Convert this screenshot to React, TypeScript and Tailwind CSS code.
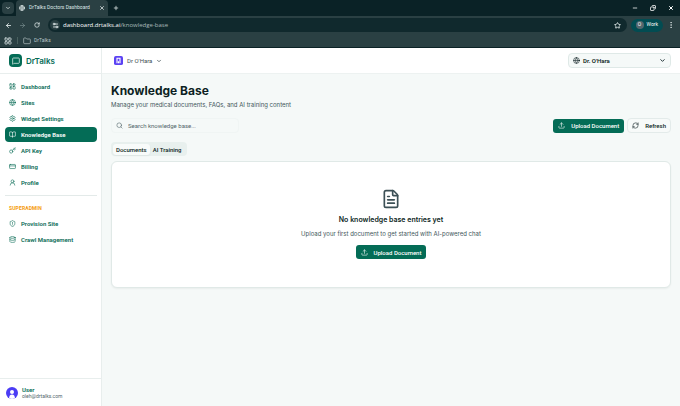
import React, { useState } from 'react';
import {
  ArrowLeft, ArrowRight, BookOpen, ChevronDown, Copy, CreditCard, Database,
  FileText, Folder, Globe, Key, LayoutDashboard, LayoutGrid, MessageSquare, Minus, MoreVertical, Plus,
  RefreshCw, RotateCw, Search, Settings, Settings2, ShieldAlert, Star, Upload, UserRound, X,
} from 'lucide-react';

const NAV = [
  { label: 'Dashboard', icon: LayoutDashboard },
  { label: 'Sites', icon: Globe },
  { label: 'Widget Settings', icon: Settings },
  { label: 'Knowledge Base', icon: BookOpen },
  { label: 'API Key', icon: Key },
  { label: 'Billing', icon: CreditCard },
  { label: 'Profile', icon: UserRound },
];

const ADMIN_NAV = [
  { label: 'Provision Site', icon: ShieldAlert },
  { label: 'Crawl Management', icon: Database },
];

const TABS = ['Documents', 'AI Training'];

function BrowserChrome() {
  return (
    <div className="border-b border-[#0b2226] bg-[#2a4043] text-[#dfe8e8]">
      <div className="flex h-4 items-center bg-[#0a2226] pl-[2px] pr-[6px]">
        <button aria-label="Search tabs" className="flex h-3 w-3 items-center justify-center rounded-sm bg-[#2a4043]">
          <ChevronDown className="h-[6px] w-[6px]" strokeWidth={3} />
        </button>
        <div className="ml-[2px] flex h-full w-[92px] items-center rounded-t bg-[#2a4043] pl-[3px] pr-[3px]">
          <Globe className="h-[6px] w-[6px] shrink-0" strokeWidth={3} />
          <span className="ml-[4px] flex-1 whitespace-nowrap text-[5px]">DrTalks Doctors Dashboard</span>
          <button aria-label="Close tab"><X className="h-[6px] w-[6px]" strokeWidth={3} /></button>
        </div>
        <button aria-label="New tab" className="ml-[5px]"><Plus className="h-[6px] w-[6px]" strokeWidth={3} /></button>
        <div className="ml-auto flex items-center gap-3 text-white">
          <button aria-label="Minimize"><Minus className="h-[6px] w-[6px]" strokeWidth={3} /></button>
          <button aria-label="Restore"><Copy className="h-[6px] w-[6px] rotate-90" strokeWidth={3} /></button>
          <button aria-label="Close"><X className="h-[6px] w-[6px]" strokeWidth={4} /></button>
        </div>
      </div>

      <div className="flex h-[18px] items-center pl-[5px] pr-[5px]">
        <button aria-label="Back"><ArrowLeft className="h-[7px] w-[7px]" strokeWidth={3} /></button>
        <button aria-label="Forward" className="ml-[7px] text-[#84999b]"><ArrowRight className="h-[7px] w-[7px]" /></button>
        <button aria-label="Reload" className="ml-[8px]"><RotateCw className="h-[6px] w-[6px]" strokeWidth={3} /></button>
        <div className="ml-[8px] flex h-[14px] flex-1 items-center rounded-full bg-[#10292d] pl-[2px] pr-[6px]">
          <span className="flex h-[10px] w-[10px] items-center justify-center rounded-full bg-[#2a4043]">
            <Settings2 className="h-[7px] w-[7px]" strokeWidth={3} />
          </span>
          <span className="ml-[3px] font-['Open_Sans',sans-serif] text-[6px] leading-[8px] text-[#a9b9ba]"><span className="text-white">dashboard.drtalks.ai</span>/knowledge-base</span>
          <button aria-label="Bookmark" className="ml-auto"><Star className="h-[7px] w-[7px]" strokeWidth={3} /></button>
        </div>
        <button className="ml-[4px] flex h-[13px] items-center gap-[3px] rounded-full bg-[#024c52] px-[5px] text-[5px] text-white">
          <span className="flex h-[8px] w-[8px] items-center justify-center rounded-full bg-[#53676e] text-[5px]">O</span>
          Work
        </button>
        <button aria-label="Browser menu" className="ml-[4px]"><MoreVertical className="h-[8px] w-[8px]" /></button>
      </div>

      <div className="flex h-[13px] items-center pl-[4px] text-[5px] text-[#b9c6c7]">
        <button aria-label="Apps"><LayoutGrid className="h-[8px] w-[8px]" strokeWidth={3} /></button>
        <span className="ml-[5px] h-[7px] w-px bg-[#49605f]" />
        <button className="ml-[5px] flex items-center gap-[3px]">
          <Folder className="h-[8px] w-[8px]" />DrTalks
        </button>
      </div>
    </div>
  );
}

function NavLink({ label, icon: Icon, active }: { label: string; icon: React.ElementType; active?: boolean }) {
  return (
    <a
      href="#"
      className={`flex h-[15px] items-center gap-[5px] whitespace-nowrap rounded px-[4px] text-[6px] font-semibold ${
        active ? 'bg-[#046c56] text-white' : 'text-[#076a55]'
      }`}
    >
      <Icon className="h-[7px] w-[7px] shrink-0" strokeWidth={2} />
      {label}
    </a>
  );
}

function Sidebar() {
  return (
    <aside className="flex w-[102px] shrink-0 flex-col border-r border-[#e8eeed] bg-white">
      <div className="flex h-[26px] items-center gap-[4px] border-b border-[#e8eeed] pl-[9px]">
        <span className="flex h-[13px] w-[13px] items-center justify-center rounded bg-[#046c56] text-white">
          <MessageSquare className="h-[8px] w-[8px]" />
        </span>
        <span className="font-['Inter',sans-serif] text-[8px] font-semibold text-[#046c56]">DrTalks</span>
      </div>

      <nav className="flex flex-col pl-[5px] pr-[4px] pt-[5px]">
        <div className="flex flex-col gap-px">
          {NAV.map(item => (
            <NavLink key={item.label} {...item} active={item.label === 'Knowledge Base'} />
          ))}
        </div>
        <div className="mt-[5px] border-t border-[#e3eae9] pt-2">
          <h2 className="px-[4px] text-[5px] font-bold leading-[8px] tracking-wide text-[#f59a0b]">SUPERADMIN</h2>
          <div className="mt-1 flex flex-col gap-px">
            {ADMIN_NAV.map(item => <NavLink key={item.label} {...item} />)}
          </div>
        </div>
      </nav>

      <div className="mt-auto flex h-[28px] items-center gap-[4px] border-t border-[#e8eeed] pl-[6px]">
        <span className="flex h-[12px] w-[12px] shrink-0 items-center justify-center overflow-hidden rounded-full bg-[#4b3cf5]">
          <svg viewBox="0 0 12 12" className="h-full w-full" fill="#fff">
            <circle cx="6" cy="5" r="2" />
            <path d="M3 12c0-3 1.200-4.400 3-4.400S9 9 9 12z" />
          </svg>
        </span>
        <div>
          <p className="text-[6px] font-semibold leading-[7px] text-[#046c56]">User</p>
          <p className="text-[5px] leading-[7px] text-[#52666a]">oleh@drtalks.com</p>
        </div>
      </div>
    </aside>
  );
}

function UploadButton() {
  return (
    <button className="flex h-[14px] items-center gap-[6px] whitespace-nowrap rounded-[3px] bg-[#046c56] px-[5px] text-[6px] font-medium text-white">
      <Upload className="h-[7px] w-[7px]" />
      Upload Document
    </button>
  );
}

export default function App() {
  const [tab, setTab] = useState(TABS[0]);
  const [query, setQuery] = useState('');

  return (
    <div className="flex min-h-screen flex-col bg-[#f5f9f8] font-[Roboto,sans-serif] text-[#0d1f23]">
      <BrowserChrome />
      <div className="flex flex-1">
        <Sidebar />
        <div className="flex min-w-0 flex-1 flex-col">
          <header className="flex h-[26px] items-center justify-between border-b border-[#edf2f1] bg-white pl-[12px] pr-[9px]">
            <button className="flex items-center gap-[4px] text-[6px] text-[#3f5054]">
              <svg viewBox="0 0 24 24" className="h-[9px] w-[9px]" fill="none">
                <rect width="24" height="24" rx="5" fill="#5b42f3" />
                <path d="M8 19V6h8v13M12 19v-5" stroke="#fff" strokeWidth="3" />
              </svg>
              Dr O'Hara
              <ChevronDown className="h-[6px] w-[6px]" strokeWidth={3} />
            </button>
            <button className="flex h-[15px] w-[103px] items-center gap-[3px] rounded border border-[#dfe9e7] bg-[#f5f9f8] px-[4px] text-[6px] font-semibold">
              <Globe className="h-[7px] w-[7px]" />
              Dr. O'Hara
              <ChevronDown className="ml-auto h-[7px] w-[7px]" strokeWidth={3} />
            </button>
          </header>

          <main className="px-[9px] pt-2">
            <h1 className="font-['Inter',sans-serif] text-[12px] font-bold leading-[18px]">Knowledge Base</h1>
            <p className="font-['Inter',sans-serif] text-[6px] leading-[9px] text-[#43575b]">Manage your medical documents, FAQs, and AI training content</p>

            <div className="mt-[9px] flex items-center justify-between">
              <label className="flex h-[15px] w-[128px] items-center gap-[5px] rounded border border-[#f0f5f4] px-[4px]">
                <Search className="h-[7px] w-[7px] shrink-0 text-[#52666a]" />
                <input
                  value={query}
                  onChange={e => setQuery(e.target.value)}
                  aria-label="Search knowledge base"
                  placeholder="Search knowledge base..."
                  className="min-w-0 flex-1 bg-transparent text-[6px] outline-none placeholder:text-[#52666a]"
                />
              </label>
              <div className="flex items-center gap-[3px]">
                <UploadButton />
                <button className="flex h-[15px] items-center gap-[6px] rounded border border-[#e3ebea] bg-[#f7faf9] px-[4px] text-[6px] font-medium">
                  <RefreshCw className="h-[7px] w-[7px]" />
                  Refresh
                </button>
              </div>
            </div>

            <div role="tablist" className="mt-[9px] inline-flex h-[14px] items-center rounded bg-[#e8f0ee] px-[2px] align-top">
              {TABS.map(t => (
                <button
                  key={t}
                  role="tab"
                  aria-selected={tab === t}
                  onClick={() => setTab(t)}
                  className={`h-[11px] rounded-[3px] px-[3px] text-[6px] font-medium ${tab === t ? 'bg-[#f8fbfa] shadow-xs' : ''}`}
                >
                  {t}
                </button>
              ))}
            </div>

            <section className="mt-[4px] flex flex-col items-center rounded-md border border-[#e0e9e7] bg-white pb-[28px] pt-[27px] shadow-xs">
              <FileText className="h-5 w-5 text-[#3c5056]" />
              <h2 className="mt-[5px] font-['Inter',sans-serif] text-[7px] font-semibold leading-[12px]">No knowledge base entries yet</h2>
              <p className="mb-[5px] mt-[2px] font-['Inter',sans-serif] text-[6px] leading-[12px] text-[#43575b]">Upload your first document to get started with AI-powered chat</p>
              <UploadButton />
            </section>
          </main>
        </div>
      </div>
    </div>
  );
}
